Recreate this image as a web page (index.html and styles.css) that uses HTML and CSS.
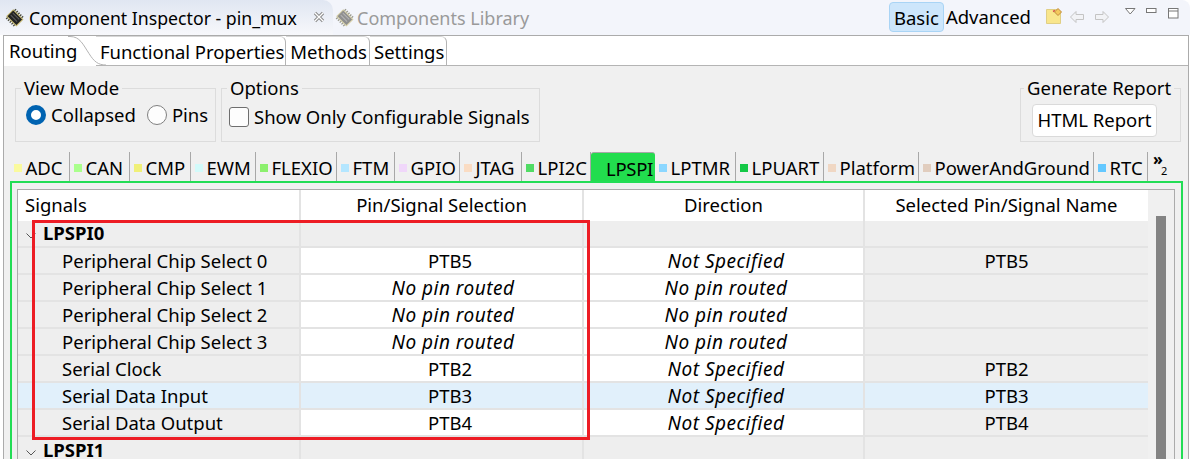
FILE: index.html
```html
<!DOCTYPE html>
<html lang="en">
<head>
    <meta charset="utf-8">
    <title>Component Inspector - pin_mux</title>
    <link rel="stylesheet" href="styles.css">
</head>
<body>
<div class="view">
    <div class="titlebar">
        <div class="view-tab active">
            <svg class="chip" width="20" height="20" viewBox="0 0 20 20"><g transform="rotate(45 10 10)"><path d="M4.500 3v3M7 3v3M9.500 3v3M12 3v3M14.500 3v3M4.500 14v3M7 14v3M9.500 14v3M12 14v3M14.500 14v3" stroke="#4a4a3c" stroke-width="1.300"/><rect x="3" y="5.500" width="13.500" height="9" fill="#222" stroke="#c4b66c"/><path d="M5 8h9M5 11h9" stroke="#5c5c5c"/></g></svg>
            <span class="view-title">Component Inspector - pin_mux</span>
            <svg class="close" width="12" height="12" viewBox="0 0 12 12"><path d="M2 2l8 8M10 2l-8 8" stroke="#8c8c8c" stroke-width="3.200"/><path d="M2 2l8 8M10 2l-8 8" stroke="#fff" stroke-width="1.200"/></svg>
        </div>
        <div class="view-tab idle">
            <svg class="chip" width="20" height="20" viewBox="0 0 20 20"><g transform="rotate(45 10 10)"><path d="M4.500 3v3M7 3v3M9.500 3v3M12 3v3M14.500 3v3M4.500 14v3M7 14v3M9.500 14v3M12 14v3M14.500 14v3" stroke="#9c9c90" stroke-width="1.300"/><rect x="3" y="5.500" width="13.500" height="9" fill="#8f8f8f" stroke="#d6cfa6"/><path d="M5 8h9M5 11h9" stroke="#b5b5b5"/></g></svg>
            <span class="view-title lib">Components Library</span>
        </div>
        <div class="view-tools">
            <span class="mode on">Basic</span>
            <span class="mode adv">Advanced</span>
            <svg class="note" width="16" height="17" viewBox="0 0 16 17"><path d="M.5 1.500h11l3 3v11H.5z" fill="#f9e68c" stroke="#e0cf85"/><path d="M7 3.500l2-1" stroke="#d9534f" stroke-width="1.500"/><path d="M12 .5l3.500 3.500-3.500 3.500L8.500 4z" fill="#f4c95d" stroke="#c08a3a"/></svg>
            <svg class="arrow" width="16" height="14" viewBox="0 0 16 14"><path d="M7 1.500L1.500 7 7 12.500V9.500h7.500v-5H7z" fill="#f2f3f6" stroke="#c4c4c4"/></svg>
            <svg class="arrow" width="16" height="14" viewBox="0 0 16 14"><path d="M9 1.500L14.500 7 9 12.500V9.500H1.500v-5H9z" fill="#f2f3f6" stroke="#c4c4c4"/></svg>
            <svg class="win-menu" width="11" height="7" viewBox="0 0 11 7"><path d="M.5.500h9.500L5.200 6z" fill="#fff" stroke="#777"/></svg>
            <svg class="win-min" width="11" height="6" viewBox="0 0 11 6"><rect x=".5" y=".5" width="9.500" height="4" fill="#fff" stroke="#777"/></svg>
            <svg class="win-max" width="11" height="11" viewBox="0 0 11 11"><rect x=".5" y=".5" width="9.500" height="9.500" fill="#fff" stroke="#777"/><path d="M.5 3h9.500" stroke="#777"/></svg>
        </div>
    </div>

    <div class="panel">
        <div class="page-tabs">
            <div class="page-tab first">Routing
                <svg class="curve" width="38" height="30" viewBox="0 0 38 30"><path d="M0 .5h2c10 0 13 8 19 17 5 8 9 11.500 17 11.500" fill="none" stroke="#b4b4b4"/></svg>
            </div>
            <div class="page-tab fp">Functional Properties</div>
            <div class="page-tab">Methods</div>
            <div class="page-tab">Settings</div>
        </div>

        <div class="body">
            <div class="options">
                <fieldset class="group view-mode">
                    <legend>View Mode</legend>
                    <div class="opt-row">
                        <span class="radio checked"></span><span class="opt-label">Collapsed</span>
                        <span class="radio"></span><span class="opt-label">Pins</span>
                    </div>
                </fieldset>
                <fieldset class="group opts">
                    <legend>Options</legend>
                    <div class="opt-row">
                        <span class="check"></span><span class="opt-label">Show Only Configurable Signals</span>
                    </div>
                </fieldset>
                <fieldset class="group report">
                    <legend>Generate Report</legend>
                    <span class="button">HTML Report</span>
                </fieldset>
            </div>

            <div class="cat-tabs">
                <div class="cat w-adc"><i class="sq" style="background:#fafa9e"></i>ADC</div>
                <div class="cat w-can"><i class="sq" style="background:#aaff8c"></i>CAN</div>
                <div class="cat w-cmp"><i class="sq" style="background:#f0f078"></i>CMP</div>
                <div class="cat w-ewm"><i class="sq" style="background:#d2fafa"></i>EWM</div>
                <div class="cat w-flexio"><i class="sq" style="background:#8cf06e"></i>FLEXIO</div>
                <div class="cat w-ftm"><i class="sq" style="background:#b4e6ff"></i>FTM</div>
                <div class="cat w-gpio"><i class="sq" style="background:#f0d7fa"></i>GPIO</div>
                <div class="cat w-jtag"><i class="sq" style="background:#fadcc3"></i>JTAG</div>
                <div class="cat w-lpi2c"><i class="sq" style="background:#50dc64"></i>LPI2C</div>
                <div class="cat w-lpspi selected">LPSPI</div>
                <div class="cat w-lptmr"><i class="sq" style="background:#8cd7ff"></i>LPTMR</div>
                <div class="cat w-lpuart"><i class="sq" style="background:#14c846"></i>LPUART</div>
                <div class="cat w-platform"><i class="sq" style="background:#f0d7c3"></i>Platform</div>
                <div class="cat w-pag"><i class="sq" style="background:#e1cdbe"></i>PowerAndGround</div>
                <div class="cat w-rtc"><i class="sq" style="background:#64c8ff"></i>RTC</div>
                <div class="more"><span class="chev">»</span><span class="more-n">2</span></div>
            </div>

            <div class="green-box">
                <div class="frame">
                    <div class="grid">
                        <div class="row head">
                            <div class="cell c1 left">Signals</div>
                            <div class="cell c2">Pin/Signal Selection</div>
                            <div class="cell c3">Direction</div>
                            <div class="cell c4">Selected Pin/Signal Name</div>
                        </div>
                        <div class="row section">
                            <div class="cell c1 left"><svg class="twisty" width="12" height="8" viewBox="0 0 12 8"><path d="M1.500 1.500L6 6l4.500-4.500" fill="none" stroke="#555"/></svg><b>LPSPI0</b></div>
                            <div class="cell c2"></div><div class="cell c3"></div><div class="cell c4"></div>
                        </div>
                        <div class="row data">
                            <div class="cell c1 sig">Peripheral Chip Select 0</div>
                            <div class="cell c2 white">PTB5</div>
                            <div class="cell c3 white"><em>Not Specified</em></div>
                            <div class="cell c4">PTB5</div>
                        </div>
                        <div class="row data">
                            <div class="cell c1 sig">Peripheral Chip Select 1</div>
                            <div class="cell c2 white"><em>No pin routed</em></div>
                            <div class="cell c3 white"><em>No pin routed</em></div>
                            <div class="cell c4"></div>
                        </div>
                        <div class="row data">
                            <div class="cell c1 sig">Peripheral Chip Select 2</div>
                            <div class="cell c2 white"><em>No pin routed</em></div>
                            <div class="cell c3 white"><em>No pin routed</em></div>
                            <div class="cell c4"></div>
                        </div>
                        <div class="row data">
                            <div class="cell c1 sig">Peripheral Chip Select 3</div>
                            <div class="cell c2 white"><em>No pin routed</em></div>
                            <div class="cell c3 white"><em>No pin routed</em></div>
                            <div class="cell c4"></div>
                        </div>
                        <div class="row data">
                            <div class="cell c1 sig">Serial Clock</div>
                            <div class="cell c2 white">PTB2</div>
                            <div class="cell c3 white"><em>Not Specified</em></div>
                            <div class="cell c4">PTB2</div>
                        </div>
                        <div class="row data hover">
                            <div class="cell c1 sig">Serial Data Input</div>
                            <div class="cell c2">PTB3</div>
                            <div class="cell c3"><em>Not Specified</em></div>
                            <div class="cell c4">PTB3</div>
                        </div>
                        <div class="row data">
                            <div class="cell c1 sig">Serial Data Output</div>
                            <div class="cell c2 white">PTB4</div>
                            <div class="cell c3 white"><em>Not Specified</em></div>
                            <div class="cell c4">PTB4</div>
                        </div>
                        <div class="row section last">
                            <div class="cell c1 left"><svg class="twisty" width="12" height="8" viewBox="0 0 12 8"><path d="M1.500 1.500L6 6l4.500-4.500" fill="none" stroke="#555"/></svg><b>LPSPI1</b></div>
                            <div class="cell c2"></div><div class="cell c3"></div><div class="cell c4"></div>
                        </div>
                        <div class="redbox"></div>
                    </div>
                    <div class="scrollbar"><div class="thumb"></div></div>
                </div>
            </div>
        </div>
    </div>
</div>
</body>
</html>
```
FILE: styles.css
```css
* {
    box-sizing: border-box;
}
html, body {
    margin: 0;
    padding: 0;
    height: 459px;
    overflow: hidden;
    background: #fff;
}
body {
    font-family: "Noto Sans", "Open Sans", sans-serif;
    font-size: 18.5px;
    color: #000;
}
.view {
    width: 1193px;
    height: 459px;
    overflow: hidden;
}

/* top bar */
.titlebar {
    display: flex;
    height: 35px;
    width: 1190px;
    background: #f3f5fb;
    border-top-right-radius: 8px;
}
.view-tab {
    display: flex;
    align-items: center;
    height: 35px;
}
.view-tab.active {
    width: 333px;
    padding-left: 5px;
    background: linear-gradient(#e0e6f2, #f7f8fb);
    border-top-right-radius: 10px;
}
.view-tab.idle {
    padding-left: 2px;
    color: #9a9a9a;
}
.view-title {
    margin-left: 4px;
    font-size: 17.7px;
    white-space: nowrap;
}
.view-title.lib {
    margin-left: 2px;
    font-size: 18px;
}
.close {
    margin-left: 16px;
    margin-top: -1px;
}
.view-tools {
    display: flex;
    align-items: flex-start;
    margin-left: auto;
    padding-right: 11px;
}
.mode {
    height: 30px;
    margin-top: 2px;
    padding: 0 2px;
    line-height: 29px;
    white-space: nowrap;
}
.mode.on {
    background: #cde6fb;
    border: 1px solid #a9d4f5;
    border-radius: 4px;
    padding: 0 4px;
}
.note { margin: 8px -2px 0 13px; }
.arrow { margin: 10px 0 0 9px; }
.win-menu { margin: 8px 0 0 15px; }
.win-min { margin: 8px 0 0 10px; }
.win-max { margin: 8px 0 0 11px; }

/* panel with page tabs */
.panel {
    width: 1186px;
    margin-left: 3px;
    height: 424px;
    border: 1px solid #ababab;
    border-bottom: none;
    background: #fff;
}
.page-tabs {
    display: flex;
    height: 30px;
    border-bottom: 1px solid #b4b4b4;
}
.page-tab {
    position: relative;
    height: 30px;
    line-height: 30px;
    padding: 0 2px 0 4px;
    border-right: 1px solid #b4b4b4;
    border-top-right-radius: 6px;
    border-top: 1px solid #d6d6d6;
    white-space: nowrap;
}
.page-tab.first {
    width: 92px;
    border: none;
    border-top-right-radius: 0;
    padding-left: 5px;
    background: #fff;
}
.curve {
    position: absolute;
    top: 0;
    left: 64px;
}
.page-tab.fp {
    padding: 0 1px 0 4px;
    letter-spacing: -.05px;
}
.body {
    height: 393px;
    background: #f0f0f0;
    padding: 0 0 0 6px;
}

/* option groups */
.options {
    display: flex;
    height: 86px;
    padding: 10px 0 0 5px;
    gap: 5px;
}
.group {
    margin: 0;
    padding: 0 0 0 10px;
    height: 66px;
    min-width: 0;
    border: 1px solid #dcdcdc;
}
.group legend {
    padding: 0 3px;
    margin-left: -5px;
    line-height: 24px;
    white-space: nowrap;
}
.view-mode { width: 201px; }
.opts {
    width: 319px;
    padding-left: 7px;
}
.opts legend { margin-left: -2px; }
.report {
    width: 161px;
    margin-left: 475px;
    padding-left: 11px;
}
.report legend { margin-left: -8px; }
.opt-row {
    display: flex;
    align-items: center;
    height: 25px;
    margin-top: 2px;
    white-space: nowrap;
}
.opts .opt-row { margin-top: 4px; }
.radio {
    flex: none;
    width: 20px;
    height: 20px;
    border: 1px solid #808080;
    border-radius: 50%;
    background: #fdfdfd;
    margin-right: 5px;
}
.radio.checked {
    border: 5px solid #0063b1;
    background: #fff;
}
.opt-label {
    margin-right: 11px;
    white-space: nowrap;
}
.check {
    flex: none;
    width: 20px;
    height: 20px;
    border: 1px solid #6e6e6e;
    border-radius: 3px;
    background: #fdfdfd;
    margin-right: 5px;
}
.button {
    display: block;
    width: 125px;
    height: 33px;
    line-height: 30px;
    text-align: center;
    background: #fff;
    border: 1px solid #dadada;
    border-radius: 4px;
    margin-top: 4px;
    white-space: nowrap;
}

/* category tabs */
.cat-tabs {
    display: flex;
    height: 29px;
    margin-left: -6px;
    padding-left: 6px;
}
.cat {
    position: relative;
    display: flex;
    align-items: center;
    height: 29px;
    padding-left: 15.5px;
    padding-top: 2px;
    border-right: 1px solid #a8a8a8;
    white-space: nowrap;
}
.sq {
    position: absolute;
    left: 4px;
    top: 12px;
    width: 8px;
    height: 8px;
}
.w-adc { width: 60px; }
.w-can { width: 60px; }
.w-cmp { width: 61px; }
.w-ewm { width: 65px; }
.w-flexio { width: 81px; }
.w-ftm { width: 58px; }
.w-gpio { width: 65px; }
.w-jtag { width: 62px; }
.w-lpi2c { width: 69px; }
.w-lpspi { width: 64px; }
.w-lptmr { width: 81px; }
.w-lpuart { width: 88px; }
.w-platform { width: 95px; }
.w-pag { width: 175px; }
.w-rtc { width: 54px; }
.selected {
    padding-left: 15px;
    letter-spacing: -.3px;
    background: #22dd4e;
    border-right: none;
    border-top: 1px solid #a8a8a8;
    border-top-left-radius: 3px;
    border-top-right-radius: 3px;
}
.more {
    position: relative;
    width: 30px;
}
.chev {
    position: absolute;
    left: 5px;
    top: 1px;
    font-size: 16px;
    font-weight: 700;
    line-height: 12px;
}
.more-n {
    position: absolute;
    left: 13px;
    top: 13px;
    font-size: 11px;
    line-height: 11px;
}

/* green framed table */
.green-box {
    width: 1173px;
    height: 278px;
    border: 2px solid #22dd55;
    border-bottom: none;
    padding: 6px 6px 0 5px;
}
.frame {
    display: flex;
    height: 272px;
    border: 1px solid #ababab;
    border-bottom: none;
    background: #f0f0f0;
}
.grid {
    position: relative;
    width: 1130px;
}
.row {
    display: flex;
    height: 27px;
    border-bottom: 2px solid #e3e3e3;
    background: #eeeeee;
    line-height: 26px;
}
.row.head {
    height: 31px;
    border-bottom: none;
    background: #fff;
    line-height: 30px;
}
.row.section {
    height: 27px;
    line-height: 24px;
}
.row.section.last {
    border-bottom: none;
    line-height: 26px;
}
.cell {
    height: 100%;
    text-align: center;
    border-right: 2px solid #e3e3e3;
    white-space: nowrap;
}
.c1 { width: 283px; }
.c2 { width: 283px; }
.c3 { width: 281px; }
.c4 { width: 283px; border-right: none; }
.data .c2 { padding-left: 17px; }
.data .c2 em { margin-left: 6px; }
.data .c3 { padding-left: 5px; }
.left {
    text-align: left;
    padding-left: 7px;
}
.sig {
    text-align: left;
    padding-left: 44px;
}
.white {
    background: #fff;
}
.row.hover {
    background: #e1f0fb;
}
.twisty {
    margin-right: 6px;
}
.section b {
    font-weight: 700;
}
em {
    font-size: 19px;
    letter-spacing: .5px;
}
.redbox {
    position: absolute;
    left: 14px;
    top: 30px;
    width: 558px;
    height: 220px;
    border: 3px solid #ed1c24;
}
.scrollbar {
    width: 26px;
    margin-left: 2px;
    padding: 26px 8px 0 6px;
}
.thumb {
    height: 260px;
    background: #838383;
}
```
